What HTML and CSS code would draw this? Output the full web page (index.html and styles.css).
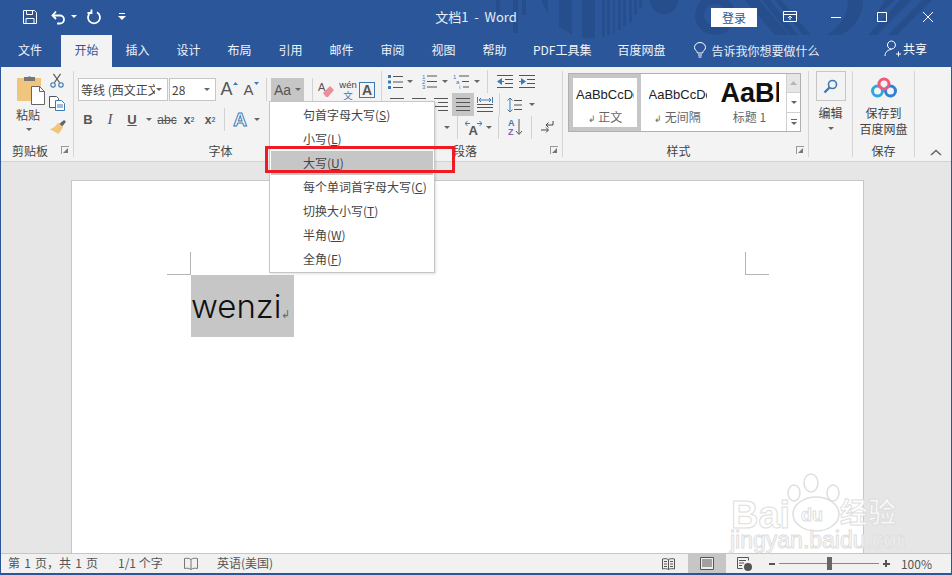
FILE: index.html
```html
<!DOCTYPE html>
<html lang="zh-CN">
<head>
    <meta charset="UTF-8">
    <title>文档1 - Word</title>
    <link rel="stylesheet" href="styles.css">
</head>
<body>
<div class="window">

    <!-- Bandeau bleu : titre + onglets -->
    <header class="top">
        <svg class="pattern" width="952" height="40" viewBox="0 0 952 40">
            <path d="M496 0h4v14h-4zM513 0h5v33h-5zM522 0h4v15h-4zM541 0h7v14zM559 0h13v34l-13-7zM582 0h13v38h-13z"/>
            <path d="M602 0h3v37h-3zM607 0h3v35h-3zM613 0h2v33h-2zM618 0h3v30h-3zM623 0h3v26h-3zM629 0h3v22h-3zM634 0h3v15h-3zM639 0h3v8h-3z"/>
            <path d="M650 0h28a14 14 0 0 1-28 0z"/>
            <path d="M715 -5a20 20 0 1 0 0.1 0zM715 4a11 11 0 1 1-0.1 0z" fill-rule="evenodd"/>
            <path d="M745 0h14l30 35h-14zM762 0h8l28 35h-8zM775 0h6l30 35h-8zM848 0h15c0 15-8 28-22 35h-14c13-8 21-20 21-35z"/>
            <path d="M885 0h10l-22 20zM900 0h12l-35 35h-9zM922 0h10l-35 35h-9z"/>
        </svg>

        <div class="titlebar">
            <div class="qat">
                <svg width="16" height="16" viewBox="0 0 16 16"><path class="wl" d="M1.500 1.500h11l2 2v11h-13zM4.500 1.500v4h6v-4M4 14.500v-5h8v5"/></svg>
                <svg class="qat-undo" width="16" height="16" viewBox="0 0 16 16"><path class="wl thick" d="M3 6.500h7a4 4 0 0 1 0 8H7M6 2.500l-3.500 4 3.500 3.500"/></svg>
                <svg class="qat-caret" width="6" height="4" viewBox="0 0 6 4"><path fill="#fff" d="M0 0h6l-3 3z"/></svg>
                <svg class="qat-redo" width="16" height="16" viewBox="0 0 16 16"><path class="wl thick" d="M5 3.200a6 6 0 1 0 6 0M5.500 .5v3.500h-4"/></svg>
                <svg class="qat-more" width="8" height="8" viewBox="0 0 8 8"><path fill="#fff" d="M1 0h6v1H1zM0 3h8l-4 4z"/></svg>
            </div>
            <div class="doc-title">文档1&nbsp;&nbsp;-&nbsp;&nbsp;Word</div>
            <div class="win-tools">
                <button class="login">登录</button>
                <svg class="win-btn" width="14" height="12" viewBox="0 0 14 12"><path class="wl" d="M.5 .5h13v10H.5zM.5 3.500h13M7 9V5M5 7l2-2 2 2"/></svg>
                <svg class="win-btn" width="10" height="10" viewBox="0 0 10 10"><path class="wl" d="M0 5.500h10"/></svg>
                <svg class="win-btn" width="10" height="10" viewBox="0 0 10 10"><path class="wl" d="M.5 .5h9v9h-9z"/></svg>
                <svg class="win-btn" width="10" height="10" viewBox="0 0 10 10"><path class="wl" d="M0 0l10 10M10 0L0 10"/></svg>
            </div>
        </div>

        <nav class="tabs">
            <span class="tab tab-file">文件</span>
            <span class="tab active">开始</span>
            <span class="tab">插入</span>
            <span class="tab">设计</span>
            <span class="tab">布局</span>
            <span class="tab">引用</span>
            <span class="tab">邮件</span>
            <span class="tab">审阅</span>
            <span class="tab">视图</span>
            <span class="tab">帮助</span>
            <span class="tab tab-wide">PDF工具集</span>
            <span class="tab tab-wide">百度网盘</span>
            <span class="tell">
                <svg width="12" height="16" viewBox="0 0 12 16"><path class="wl" d="M3.500 11C3 8.500 .5 8 .5 5.500a5.500 5 0 0 1 11 0C11.500 8 9 8.500 8.500 11zM4 13h4M4.500 15h3"/></svg>
                告诉我你想要做什么
            </span>
            <span class="share">
                <svg width="18" height="18" viewBox="0 0 18 18"><path class="wl" d="M7.500 1a4 4 0 1 1-.1 0zM1 16c0-4 3-6.500 6.500-6.500M12 14h5M14.500 11.500v5"/></svg>
                共享
            </span>
        </nav>
    </header>

    <!-- Ruban -->
    <div class="ribbon">

        <section class="group group-clip">
            <div class="group-body clip-body">
                <div class="paste">
                    <svg width="30" height="31" viewBox="0 0 30 31">
                        <path fill="#f0c67e" d="M1 4h24v23H1z"/>
                        <path fill="#777" d="M8 3h4a2 2 0 0 1 3 0h4v4H8z"/>
                        <path fill="#fff" stroke="#666" d="M15.500 12.500h8l5 5v13h-13z"/>
                        <path fill="none" stroke="#666" d="M23.500 12.500v5h5"/>
                    </svg>
                    <span>粘贴</span>
                    <i class="caret"></i>
                </div>
                <div class="clip-tools">
                    <svg width="16" height="15" viewBox="0 0 16 17"><path fill="none" stroke="#555" stroke-width="1.300" d="M4 1l7 10M12 1L5 11"/><circle cx="3.500" cy="13.500" r="2.500" fill="none" stroke="#3d7ab5" stroke-width="1.300"/><circle cx="12.500" cy="13.500" r="2.500" fill="none" stroke="#3d7ab5" stroke-width="1.300"/></svg>
                    <svg width="16" height="15" viewBox="0 0 16 15"><path fill="#fff" stroke="#555" d="M.5 .5h7l2 2v9h-9z"/><path fill="#fff" stroke="#3d7ab5" d="M6.500 4.500h6l3 3v7h-9z"/><path stroke="#3d7ab5" d="M8 9h6M8 11h6"/></svg>
                    <svg width="17" height="15" viewBox="0 0 18 16"><path fill="#666" d="M11 5l5-4 2 2-4 5z"/><path fill="#f0c67e" d="M10 4l5 5-5 7-9-5 4-2z"/></svg>
                </div>
            </div>
            <div class="group-label"><span>剪贴板</span><i class="launcher"></i></div>
        </section>

        <section class="group group-font">
            <div class="group-body font-body">
                <div class="row">
                    <span class="select select-font"><em>等线 (西文正文)</em><i class="caret"></i></span>
                    <span class="select select-size"><em>28</em><i class="caret"></i></span>
                    <span class="btn w22 size-a big">A<svg width="5" height="3" viewBox="0 0 5 3"><path fill="#3d7ab5" d="M0 3l2.500-3L5 3z"/></svg></span>
                    <span class="btn w22 size-a">A<svg width="5" height="3" viewBox="0 0 5 3"><path fill="#3d7ab5" d="M0 0h5L2.500 3z"/></svg></span>
                    <i class="sep"></i>
                    <span class="btn w33 case-btn on">Aa<i class="caret"></i></span>
                    <i class="sep sep-wide"></i>
                    <span class="btn w22">
                        <svg width="18" height="18" viewBox="0 0 18 18"><path fill="#ee8d9b" d="M6 12l7-7 4 4-6 7H9z"/><text class="mini" x="1" y="10">A</text></svg>
                    </span>
                    <span class="btn w22 wen"><b>wén</b><b class="wen-zi">文</b></span>
                    <span class="btn w20 boxed-a">A</span>
                </div>
                <div class="row row-fmt">
                    <span class="btn w22 fmt"><b>B</b></span>
                    <span class="btn w22 fmt"><i>I</i></span>
                    <span class="btn w22 fmt"><u>U</u></span>
                    <span class="btn w12"><i class="caret"></i></span>
                    <span class="btn w22 fmt abc">abc</span>
                    <span class="btn w22 fmt">x<sub>2</sub></span>
                    <span class="btn w20 fmt">x<sup>2</sup></span>
                    <i class="sep"></i>
                    <span class="btn w22 text-fx">A</span>
                    <span class="btn w12"><i class="caret"></i></span>
                </div>
            </div>
            <div class="group-label"><span>字体</span><i class="launcher"></i></div>
        </section>

        <section class="group group-para">
            <div class="group-body para-body">
                <div class="row">
                    <span class="btn w18">
                        <svg width="15" height="14" viewBox="0 0 15 14"><path fill="#3d7ab5" d="M0 0h3v3H0zM0 5.500h3v3H0zM0 11h3v3H0z"/><path stroke="#555" d="M5 1.500h10M5 7h10M5 12.500h10"/></svg>
                    </span>
                    <span class="btn w12"><i class="caret"></i></span>
                    <span class="btn w20 gap-l">
                        <svg width="15" height="15" viewBox="0 0 15 15"><text class="mini-bl" x="0" y="5">1</text><text class="mini-bl" x="0" y="10">2</text><text class="mini-bl" x="0" y="15">3</text><path stroke="#555" d="M5 2h10M5 7.500h10M5 13h10"/></svg>
                    </span>
                    <span class="btn w12"><i class="caret"></i></span>
                    <span class="btn w20">
                        <svg width="16" height="15" viewBox="0 0 16 15"><text class="mini-bl" x="0" y="5">1</text><text class="mini-bl" x="3" y="10">a</text><text class="mini-bl" x="6" y="15">i</text><path stroke="#555" d="M6 2h10M9 7.500h7M10 13h6"/></svg>
                    </span>
                    <span class="btn w12"><i class="caret"></i></span>
                    <i class="sep"></i>
                    <span class="btn w22 gap-s">
                        <svg width="16" height="13" viewBox="0 0 16 13"><path fill="#3d7ab5" d="M0 6.500L5 3v7z"/><path stroke="#3d7ab5" d="M4 6.500h3"/><path stroke="#555" d="M0 .5h16M8 4.500h8M8 8.500h8M0 12.500h16"/></svg>
                    </span>
                    <span class="btn w22">
                        <svg width="16" height="13" viewBox="0 0 16 13"><path fill="#3d7ab5" d="M7 6.500L2 3v7z"/><path stroke="#3d7ab5" d="M0 6.500h3"/><path stroke="#555" d="M0 .5h16M8 4.500h8M8 8.500h8M0 12.500h16"/></svg>
                    </span>
                </div>
                <div class="row">
                    <span class="btn w22 align"><svg width="14" height="13" viewBox="0 0 14 13"><path stroke="#555" d="M0 .5h14M0 4.500h10M0 8.500h14M0 12.500h10"/></svg></span>
                    <span class="btn w22 align"><svg width="14" height="13" viewBox="0 0 14 13"><path stroke="#555" d="M0 .5h14M2 4.500h10M0 8.500h14M2 12.500h10"/></svg></span>
                    <span class="btn w22 align"><svg width="14" height="13" viewBox="0 0 14 13"><path stroke="#555" d="M0 .5h14M4 4.500h10M0 8.500h14M4 12.500h10"/></svg></span>
                    <span class="btn w22 on"><svg width="14" height="13" viewBox="0 0 14 13"><path stroke="#555" d="M0 .5h14M0 4.500h14M0 8.500h14M0 12.500h14"/></svg></span>
                    <span class="btn w22"><svg width="16" height="15" viewBox="0 0 16 15"><path stroke="#555" d="M0 7.500h16M0 10.500h16M0 14.500h16"/><path fill="none" stroke="#3d7ab5" d="M.5 0v6M15.500 0v6M2 3h12M4 1L2 3l2 2M12 1l2 2-2 2"/></svg></span>
                    <i class="sep sep-narrow"></i>
                    <span class="btn w24">
                        <svg width="15" height="16" viewBox="0 0 15 16"><path fill="none" stroke="#3d7ab5" d="M3 1v14M.5 3.500L3 1l2.500 2.500M.5 12.500L3 15l2.500-2.500"/><path stroke="#555" d="M7 3.500h8M7 8h8M7 12.500h8"/></svg>
                    </span>
                    <span class="btn w12"><i class="caret"></i></span>
                </div>
                <div class="row row-lower">
                    <span class="btn w12"><i class="caret"></i></span>
                    <i class="sep"></i>
                    <span class="btn w22">
                        <svg width="17" height="16" viewBox="0 0 17 16"><path fill="none" stroke="#3d7ab5" d="M0 3.500h5M2.500 1L0 3.500 2.500 6M12 3.500h5M14.500 1L17 3.500 14.500 6"/><text class="mini-big" x="3.500" y="15">A</text></svg>
                    </span>
                    <span class="btn w12 caret-tight"><i class="caret"></i></span>
                    <i class="sep"></i>
                    <span class="btn w24">
                        <svg width="15" height="18" viewBox="0 0 15 18"><text class="mini-bl-b" x="0" y="7">A</text><text class="mini-pp" x="0" y="16">Z</text><path fill="none" stroke="#555" d="M11 0v15M8 12l3 3.500 3-3.500"/></svg>
                    </span>
                    <i class="sep"></i>
                    <span class="btn w22">
                        <svg width="13" height="14" viewBox="0 0 13 14"><path fill="none" stroke="#444" d="M12 0v4H5M7.500 1.500L5 4l2.500 2.500M0 9h7M5 6.500L7.500 9 5 11.500"/></svg>
                    </span>
                </div>
            </div>
            <div class="group-label"><span>段落</span><i class="launcher"></i></div>
        </section>

        <section class="group group-style">
            <div class="group-body style-body">
                <div class="gallery">
                    <div class="style-item selected">
                        <span class="sample">AaBbCcDd</span>
                        <span class="style-name"><small>↲</small> 正文</span>
                    </div>
                    <div class="style-item">
                        <span class="sample">AaBbCcDd</span>
                        <span class="style-name"><small>↲</small> 无间隔</span>
                    </div>
                    <div class="style-item item-head">
                        <span class="sample sample-big">AaBbC</span>
                        <span class="style-name">标题 1</span>
                    </div>
                    <div class="scroller">
                        <span class="scroll-up"><svg width="7" height="4" viewBox="0 0 9 5"><path fill="#b5b5b5" d="M0 5l4.500-5L9 5z"/></svg></span>
                        <span><svg width="6" height="3" viewBox="0 0 6 3"><path fill="#666" d="M0 0h6L3 3z"/></svg></span>
                        <span><svg width="6" height="6" viewBox="0 0 6 6"><path fill="#666" d="M0 0h6v1H0zM0 3h6L3 6z"/></svg></span>
                    </div>
                </div>
            </div>
            <div class="group-label"><span>样式</span><i class="launcher"></i></div>
        </section>

        <section class="group group-edit">
            <div class="group-body edit-body">
                <span class="find-box">
                    <svg width="15" height="15" viewBox="0 0 15 15"><circle cx="9.500" cy="5.500" r="4" fill="none" stroke="#3d7ab5" stroke-width="1.600"/><path stroke="#3d7ab5" stroke-width="2.400" d="M6.500 8.500L1.500 13.500"/></svg>
                </span>
                <span class="edit-text">编辑</span>
                <i class="caret"></i>
            </div>
        </section>

        <section class="group group-save">
            <div class="group-body save-body">
                <svg width="28" height="22" viewBox="0 0 28 22">
                    <circle cx="7.500" cy="14" r="5" fill="none" stroke="#2da7e0" stroke-width="3"/>
                    <circle cx="20.500" cy="14" r="5" fill="none" stroke="#2f80d8" stroke-width="3"/>
                    <circle cx="14" cy="7" r="5" fill="none" stroke="#ee5a78" stroke-width="3"/>
                </svg>
                <span>保存到</span>
                <span>百度网盘</span>
            </div>
            <div class="group-label label-center"><span>保存</span></div>
        </section>

        <div class="collapse">
            <svg width="12" height="7" viewBox="0 0 12 7"><path fill="none" stroke="#666" stroke-width="1.500" d="M1 6l5-4.500L11 6"/></svg>
        </div>
    </div>

    <!-- Zone du document -->
    <main class="doc">
        <div class="page">
            <div class="crop-row">
                <i class="crop crop-left"></i>
                <i class="crop crop-right"></i>
            </div>
            <p class="para"><span class="selected-text">wenzi<small class="mark">↲</small></span></p>
        </div>
    </main>

    <!-- Barre d'état -->
    <footer class="status">
        <span class="st-pages">第 1 页，共 1 页</span>
        <span class="st-words">1/1 个字</span>
        <svg class="st-book" width="14" height="13" viewBox="0 0 14 13"><path fill="none" stroke="#777" d="M7 2.500C5 1 3 1 .5 1.500v10c2.500-.5 4.500-.5 6.500 1 2-1.500 4-1.500 6.500-1v-10C11 1 9 1 7 2.500zM7 2.500v10"/></svg>
        <span class="st-lang">英语(美国)</span>
        <span class="st-right">
            <span class="view">
                <svg width="13" height="12" viewBox="0 0 13 12"><path fill="none" stroke="#555" d="M6.500 1.500C5 .5 2 .5.500 1v10c1.500-.5 4.500-.5 6 .5 1.500-1 4.500-1 6-.5V1c-1.500-.5-4.500-.5-6 .5zM6.500 1.500v10M2 3.500h3M2 6h3M2 8.500h3M8 3.500h3M8 6h3M8 8.500h3"/></svg>
            </span>
            <span class="view view-on">
                <svg width="14" height="13" viewBox="0 0 14 13"><path fill="#eee" stroke="#555" d="M.5 .5h13v12H.5z"/><path stroke="#555" d="M2 3h10M2 5h10M2 7h10M2 9h10"/></svg>
            </span>
            <span class="view">
                <svg width="15" height="14" viewBox="0 0 15 14"><path fill="none" stroke="#555" d="M.5 .5h11v3M.5 .5v11h5M2 3.500h7M2 6h5M2 8.500h3"/><circle cx="11" cy="10" r="4" fill="#555"/></svg>
            </span>
            <i class="zoom-minus"></i>
            <span class="slider"><i class="thumb"></i></span>
            <i class="zoom-plus"></i>
            <span class="zoom-val">100%</span>
        </span>
    </footer>

    <!-- Menu déroulant Aa -->
    <ul class="case-menu">
        <li>句首字母大写(<u>S</u>)</li>
        <li>小写(<u>L</u>)</li>
        <li class="hover">大写(<u>U</u>)</li>
        <li>每个单词首字母大写(<u>C</u>)</li>
        <li>切换大小写(<u>T</u>)</li>
        <li>半角(<u>W</u>)</li>
        <li>全角(<u>F</u>)</li>
    </ul>
    <div class="red-box"></div>

    <!-- Filigrane -->
    <svg class="watermark" width="180" height="90" viewBox="0 0 180 90">
        <text class="wm-big" x="6" y="56">Bai</text>
        <ellipse class="wm-line" cx="91" cy="42" rx="23" ry="17"/>
        <text class="wm-du" x="76" y="49">du</text>
        <ellipse class="wm-line" cx="69" cy="21" rx="6" ry="8"/>
        <ellipse class="wm-line" cx="86" cy="11" rx="7" ry="9"/>
        <ellipse class="wm-line" cx="108" cy="21" rx="6" ry="8"/>
        <text class="wm-cn" x="115" y="51">经验</text>
        <text class="wm-url" x="5" y="76">jingyan.baidu.com</text>
    </svg>
</div>
</body>
</html>
```

FILE: styles.css
```css
* {
    box-sizing: border-box;
}

html, body {
    margin: 0;
    height: 100%;
    overflow: hidden;
}

body {
    font-family: "Noto Sans CJK SC", "Liberation Sans", sans-serif;
    font-size: 12px;
    color: #444;
}

svg {
    display: block;
    flex: none;
}

.window {
    position: relative;
    height: 575px;
    display: flex;
    flex-direction: column;
    border: solid #2b579a;
    border-width: 0 1px 2px 1px;
    background: #e6e6e6;
}

/* Bandeau */
.top {
    position: relative;
    height: 67px;
    margin: 0 -1px;
    background: #2b579a;
    color: #fff;
    overflow: hidden;
}

.pattern {
    position: absolute;
    left: 0;
    top: 0;
    fill: #264e8c;
}

.wl {
    fill: none;
    stroke: #fff;
    stroke-width: 1;
}

.wl.thick {
    stroke-width: 1.800;
}

.titlebar {
    position: relative;
    height: 34px;
    display: grid;
    grid-template-columns: 1fr auto 1fr;
    align-items: center;
}

.qat {
    display: flex;
    align-items: center;
    padding-left: 22px;
}

.qat-undo {
    margin-left: 12px;
}

.qat-caret {
    margin-left: 5px;
}

.qat-redo {
    margin-left: 9px;
}

.qat-more {
    margin-left: 16px;
}

.doc-title {
    font-size: 13px;
    color: #e8edf5;
    margin-top: -2px;
}

.win-tools {
    display: flex;
    align-items: center;
    justify-content: flex-end;
}

.login {
    width: 46px;
    height: 19px;
    padding: 0;
    border: none;
    background: #fff;
    color: #2b579a;
    font: 12px "Noto Sans CJK SC", sans-serif;
    margin-right: 26px;
}

.win-btn {
    margin-right: 36px;
}

.win-btn:nth-child(2) {
    margin-right: 34px;
}

.win-btn:last-child {
    margin-right: 19px;
}

.tabs {
    position: relative;
    height: 33px;
    display: flex;
    padding: 1px 0 0 5px;
}

.tab {
    width: 51px;
    text-align: center;
    line-height: 30px;
    color: #f0f3f8;
}

.tab-file {
    width: 50px;
    margin-right: 6px;
}

.tab.active {
    background: #f3f3f3;
    color: #2b579a;
}

.tab-wide {
    width: auto;
    padding: 0 13px;
}

.tell {
    display: flex;
    align-items: center;
    gap: 6px;
    margin: -2px 0 0 15px;
    color: #e8edf5;
}

.share {
    display: flex;
    align-items: center;
    gap: 1px;
    margin: -5px 0 0 auto;
    padding-right: 25px;
}

/* Ruban */
.ribbon {
    height: 95px;
    flex: none;
    display: flex;
    padding: 4px 0;
    background: #f3f3f3;
    border-bottom: 1px solid #d2d2d2;
}

.group {
    display: flex;
    flex-direction: column;
    border-right: 1px solid #d6d6d6;
}

.group-body {
    flex: 1;
    min-height: 0;
}

.group-label {
    height: 18px;
    padding-top: 4px;
    display: flex;
    align-items: center;
    text-align: center;
}

.group-label span {
    flex: 1;
}

.launcher {
    position: relative;
    width: 14px;
    height: 9px;
    flex: none;
}

.launcher::before {
    content: "";
    position: absolute;
    left: 2px;
    top: 0;
    width: 7px;
    height: 7px;
    border: solid #999;
    border-width: 1px 0 0 1px;
}

.launcher::after {
    content: "";
    position: absolute;
    left: 4px;
    top: 2px;
    border-style: solid;
    border-width: 0 0 5px 5px;
    border-color: transparent transparent #777 transparent;
}

.caret {
    display: inline-block;
    border-style: solid;
    border-width: 3px 3px 0 3px;
    border-color: #666 transparent transparent transparent;
}

.group-clip {
    width: 73px;
}

.clip-body {
    display: flex;
}

.paste {
    width: 47px;
    padding: 3px 0 0 12px;
    display: flex;
    flex-direction: column;
    align-items: center;
}

.paste span {
    margin: 1px 0 0 -5px;
    line-height: 17px;
    white-space: nowrap;
}

.paste .caret {
    margin: 5px 0 0 -3px;
}

.clip-tools {
    display: flex;
    flex-direction: column;
    gap: 8px;
    align-items: center;
    width: 18px;
    padding-top: 2px;
}

.group-font {
    width: 308px;
}

.font-body {
    padding: 7px 0 0 4px;
}

.row {
    display: flex;
    align-items: center;
    height: 23px;
}

.row-fmt {
    margin: 7px 0 0 -1px;
}

.select {
    height: 23px;
    display: flex;
    align-items: center;
    justify-content: space-between;
    background: #fff;
    border: 1px solid #c6c6c6;
    padding: 0 5px 0 2px;
    margin-right: 1px;
}

.select em {
    font-style: normal;
    font-size: 12px;
    white-space: nowrap;
    overflow: hidden;
}

.select-font {
    width: 90px;
}

.select-font em {
    width: 74px;
}

.select-size {
    width: 47px;
}

.btn {
    height: 23px;
    display: flex;
    align-items: center;
    justify-content: center;
    flex: none;
    color: #555;
}

.w12 { width: 12px; }
.w18 { width: 18px; }
.w20 { width: 20px; }
.w22 { width: 22px; }
.w24 { width: 24px; }
.w33 { width: 33px; }

.on {
    background: #c6c6c6;
}

.sep {
    width: 1px;
    height: 23px;
    margin: 0 4px;
    background: #d2d2d2;
    flex: none;
}

.sep-wide {
    margin: 0 2px 0 8px;
}

.sep-narrow {
    margin: 0 2px 0 3px;
}

.gap-l {
    margin-left: 3px;
}

.gap-s {
    margin-left: 2px;
}

.caret-tight {
    width: 10px;
}

.size-a {
    font: 15px "Liberation Sans", sans-serif;
    align-items: center;
}

.size-a.big {
    font-size: 18px;
    margin-left: 1px;
}

.size-a svg {
    align-self: flex-start;
    margin-top: 4px;
}

.case-btn {
    font: 14px "Liberation Sans", sans-serif;
    gap: 4px;
}

.mini {
    font: 11px "Liberation Sans", sans-serif;
    fill: #555;
}

.mini-bl {
    font: 6px "Liberation Sans", sans-serif;
    fill: #3d7ab5;
}

.mini-big {
    font: bold 13px "Liberation Sans", sans-serif;
    fill: #555;
}

.mini-bl-b {
    font: bold 9px "Liberation Sans", sans-serif;
    fill: #3d7ab5;
}

.mini-pp {
    font: bold 9px "Liberation Sans", sans-serif;
    fill: #8b5fb0;
}

.wen {
    flex-direction: column;
}

.wen b {
    font: 9.500px/11px "Liberation Sans", sans-serif;
    color: #444;
}

.wen b.wen-zi {
    font: 9.500px/11px "Noto Sans CJK SC", sans-serif;
    color: #3d7ab5;
}

.boxed-a {
    height: 16px;
    width: 16px;
    border: 1px solid #3d7ab5;
    font: bold 14px "Liberation Sans", sans-serif;
}

.fmt {
    font: 12px "Liberation Sans", sans-serif;
    font-weight: bold;
}

.fmt i {
    font-family: "Liberation Serif", serif;
    font-size: 15px;
    font-weight: normal;
}

.fmt b {
    font-size: 13px;
}

.fmt u {
    font-size: 13px;
}

.fmt sub, .fmt sup {
    font-size: 7px;
    color: #3d7ab5;
}

.abc {
    font-weight: normal;
    font-size: 12px;
    text-decoration: line-through;
    margin-left: 1px;
}

.text-fx {
    font: bold 19px "Liberation Sans", sans-serif;
    color: #fff;
    -webkit-text-stroke: 1px #3d7ab5;
}

.group-para {
    width: 181px;
}

.para-body {
    padding-left: 4px;
    margin-top: -1px;
}

.row-lower {
    padding-left: 55px;
}

.group-style {
    width: 246px;
}

.style-body {
    padding: 2px 7px 0 5px;
}

.gallery {
    height: 59px;
    display: flex;
    background: #fff;
    border: 1px solid #b0b0b0;
    width: 233px;
}

.style-item {
    width: 73px;
    display: flex;
    flex-direction: column;
    align-items: center;
    overflow: hidden;
    padding: 12px 2px 0;
}

.style-item.selected {
    width: 72px;
    border: 4px solid #c6c6c6;
    padding: 8px 0 0;
}

.sample {
    width: 58px;
    font: 13px "Liberation Sans", sans-serif;
    line-height: 18px;
    color: #222;
    white-space: nowrap;
    overflow: hidden;
}

.sample-big {
    font-size: 27px;
    font-weight: bold;
    line-height: 32px;
    color: #111;
    margin-top: -9px;
}

.style-name {
    margin-top: 5px;
    color: #666;
    line-height: 16px;
    white-space: nowrap;
}

.item-head {
    width: 71px;
}

.item-head .style-name {
    margin-top: 0;
}

.style-name small {
    font-size: 9px;
}

.scroller {
    width: 14px;
    margin-left: auto;
    display: flex;
    flex-direction: column;
    border-left: 1px solid #d0d0d0;
}

.scroller span {
    flex: 1;
    display: flex;
    align-items: center;
    justify-content: center;
    border-bottom: 1px solid #d0d0d0;
}

.scroller span:last-child {
    border-bottom: none;
}

.scroll-up {
    background: #e6e6e6;
}

.group-edit {
    width: 44px;
}

.edit-body {
    display: flex;
    flex-direction: column;
    align-items: center;
}

.find-box {
    width: 30px;
    height: 30px;
    display: flex;
    align-items: center;
    justify-content: center;
    border: 1px solid #c6c6c6;
}

.edit-text {
    margin-top: 4px;
    line-height: 16px;
}

.edit-body .caret {
    margin-top: 6px;
}

.group-save {
    width: 62px;
}

.save-body {
    display: flex;
    flex-direction: column;
    align-items: center;
    line-height: 16px;
}

.save-body svg {
    margin: 6px 0 6px;
}

.label-center span {
    text-align: center;
}

.collapse {
    flex: 1;
    display: flex;
    align-items: flex-end;
    justify-content: flex-end;
    padding: 0 9px 1px 0;
}

/* Document */
.doc {
    flex: 1;
    min-height: 0;
    padding: 18px 0 0 70px;
    display: flex;
    overflow: hidden;
}

.page {
    width: 793px;
    background: #fff;
    border: 1px solid #c6c6c6;
    border-bottom: none;
}

.crop-row {
    height: 94px;
    padding: 71px 94px 0 95px;
    display: flex;
    justify-content: space-between;
}

.crop {
    width: 24px;
    height: 23px;
    border-bottom: 1px solid #b5b5b5;
}

.crop-left {
    border-right: 1px solid #b5b5b5;
}

.crop-right {
    border-left: 1px solid #b5b5b5;
}

.para {
    margin: 0;
    padding-left: 119px;
}

.selected-text {
    display: inline-block;
    height: 62px;
    width: 103px;
    background: #c6c6c6;
    color: #111;
    font: 300 33px/62px "Inter", "Liberation Sans", sans-serif;
}

.mark {
    font-size: 11px;
    color: #666;
}

/* Barre d'état */
.status {
    height: 20px;
    flex: none;
    display: flex;
    align-items: center;
    background: #f1f1f1;
    border-top: 1px solid #c6c6c6;
    color: #555;
    padding-left: 7px;
}

.st-pages {
    width: 110px;
    word-spacing: 1.500px;
    padding-bottom: 2px;
}

.st-words {
    width: 66px;
    padding-bottom: 2px;
}

.st-book {
    margin-right: 19px;
}

.st-lang {
    padding-bottom: 2px;
}

.st-right {
    margin-left: auto;
    display: flex;
    align-items: center;
    height: 100%;
    padding-right: 19px;
}

.view {
    width: 38px;
    height: 100%;
    display: flex;
    align-items: center;
    justify-content: center;
}

.view-on {
    background: #c6c6c6;
}

.zoom-minus {
    width: 6px;
    height: 2px;
    margin: 0 4px 0 5px;
    background: #555;
}

.slider {
    position: relative;
    width: 100px;
    height: 1px;
    background: #888;
}

.thumb {
    position: absolute;
    left: 48px;
    top: -6px;
    width: 5px;
    height: 13px;
    background: #666;
}

.zoom-plus {
    position: relative;
    width: 7px;
    height: 2px;
    margin: 0 11px 0 4px;
    background: #555;
}

.zoom-plus::after {
    content: "";
    position: absolute;
    left: 2.500px;
    top: -2.500px;
    width: 2px;
    height: 7px;
    background: #555;
}

/* Menu */
.case-menu {
    position: absolute;
    left: 268px;
    top: 101px;
    width: 166px;
    margin: 0;
    padding: 1px;
    list-style: none;
    background: #fff;
    border: 1px solid #c6c6c6;
    box-shadow: 1px 1px 2px rgba(0,0,0,0.12);
}

.case-menu li {
    height: 24px;
    line-height: 24px;
    padding-left: 32px;
    color: #444;
}

.case-menu li.hover {
    background: #c6c6c6;
}

.case-menu u {
    text-underline-offset: 1px;
}

.red-box {
    position: absolute;
    left: 264px;
    top: 146px;
    width: 190px;
    height: 27px;
    border: 3px solid #ed1c24;
}

/* Filigrane */
.watermark {
    position: absolute;
    left: 724px;
    top: 472px;
}

.wm-big, .wm-du, .wm-cn, .wm-url {
    fill: rgba(255,255,255,0.75);
    stroke: #dedede;
    stroke-width: 1;
}

.wm-big {
    font: bold 38px "Liberation Sans", sans-serif;
}

.wm-du {
    font: bold 18px "Liberation Sans", sans-serif;
}

.wm-cn {
    font: bold 28px "Noto Sans CJK SC", sans-serif;
}

.wm-url {
    font: 23px "Liberation Sans", sans-serif;
}

.wm-line {
    fill: rgba(255,255,255,0.75);
    stroke: #dedede;
    stroke-width: 1.500;
}
```
